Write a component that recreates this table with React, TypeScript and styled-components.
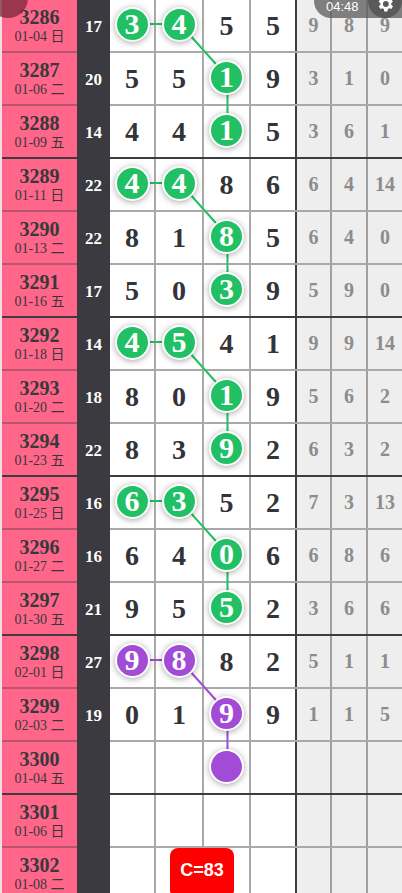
import React from "react";
import styled, { createGlobalStyle } from "styled-components";

const ROW_H = 53;
const BALL_X = [133, 180, 227.5, 274];

type Row = {
  issue: string;
  date: string;
  sum?: number;
  nums: (number | null)[];
  balls: number[];
  side: number[];
};

const rows: Row[] = [
  { issue: "3286", date: "01-04 日", sum: 17, nums: [3, 4, 5, 5], balls: [0, 1], side: [9, 8, 9] },
  { issue: "3287", date: "01-06 二", sum: 20, nums: [5, 5, 1, 9], balls: [2], side: [3, 1, 0] },
  { issue: "3288", date: "01-09 五", sum: 14, nums: [4, 4, 1, 5], balls: [2], side: [3, 6, 1] },
  { issue: "3289", date: "01-11 日", sum: 22, nums: [4, 4, 8, 6], balls: [0, 1], side: [6, 4, 14] },
  { issue: "3290", date: "01-13 二", sum: 22, nums: [8, 1, 8, 5], balls: [2], side: [6, 4, 0] },
  { issue: "3291", date: "01-16 五", sum: 17, nums: [5, 0, 3, 9], balls: [2], side: [5, 9, 0] },
  { issue: "3292", date: "01-18 日", sum: 14, nums: [4, 5, 4, 1], balls: [0, 1], side: [9, 9, 14] },
  { issue: "3293", date: "01-20 二", sum: 18, nums: [8, 0, 1, 9], balls: [2], side: [5, 6, 2] },
  { issue: "3294", date: "01-23 五", sum: 22, nums: [8, 3, 9, 2], balls: [2], side: [6, 3, 2] },
  { issue: "3295", date: "01-25 日", sum: 16, nums: [6, 3, 5, 2], balls: [0, 1], side: [7, 3, 13] },
  { issue: "3296", date: "01-27 二", sum: 16, nums: [6, 4, 0, 6], balls: [2], side: [6, 8, 6] },
  { issue: "3297", date: "01-30 五", sum: 21, nums: [9, 5, 5, 2], balls: [2], side: [3, 6, 6] },
  { issue: "3298", date: "02-01 日", sum: 27, nums: [9, 8, 8, 2], balls: [0, 1], side: [5, 1, 1] },
  { issue: "3299", date: "02-03 二", sum: 19, nums: [0, 1, 9, 9], balls: [2], side: [1, 1, 5] },
  { issue: "3300", date: "01-04 五", nums: [null, null, null, null], balls: [2], side: [] },
  { issue: "3301", date: "01-06 日", nums: [null, null, null, null], balls: [], side: [] },
  { issue: "3302", date: "01-08 二", nums: [null, null, null, null], balls: [], side: [] },
];

const GREEN = "#22c065";
const PURPLE = "#a24bd6";

const GlobalStyle = createGlobalStyle`
  html, body {
    margin: 0;
    padding: 0;
    background: #eeeeee;
    overflow: hidden;
  }
  body {
    font-family: "Liberation Serif", "Noto Sans CJK SC", serif;
  }
`;

const Page = styled.div`
  position: relative;
  width: 402px;
  height: 893px;
  overflow: hidden;
  background: #eeeeee;
`;

const Table = styled.div`
  position: relative;
  display: flex;
  flex-direction: column;
`;

const RowBox = styled.div<{ $thick: boolean }>`
  display: grid;
  grid-template-columns: 2px 75px 33px 46px 48px 47px 46px 35px 36px 34px;
  height: ${ROW_H}px;
  box-sizing: border-box;
  border-bottom: 2px solid ${(p) => (p.$thick ? "#3c3c42" : "#a9a9a9")};
`;

const Gutter = styled.div`
  background: #f2dde3;
  margin-bottom: -2px;
`;

const IssueCell = styled.div<{ $thick: boolean }>`
  background: #ff6689;
  display: flex;
  flex-direction: column;
  align-items: center;
  justify-content: center;
  color: #38383c;
  margin-bottom: -2px;
  border-bottom: 2px solid ${(p) => (p.$thick ? "#3c3c42" : "#b8566f")};
`;

const IssueNo = styled.div`
  font-size: 20px;
  line-height: 22px;
  font-weight: bold;
`;

const IssueDate = styled.div`
  font-size: 14px;
  line-height: 17px;
`;

const SumCell = styled.div`
  background: #3a3a40;
  color: #ffffff;
  font-weight: bold;
  font-size: 17px;
  display: flex;
  align-items: center;
  justify-content: center;
  margin-bottom: -2px;
`;

const NumCell = styled.div<{ $last: boolean }>`
  background: #ffffff;
  border-right: 2px solid ${(p) => (p.$last ? "#3c3c42" : "#a9a9a9")};
  display: flex;
  align-items: center;
  justify-content: center;
  font-weight: bold;
  font-size: 28px;
  color: #333338;
`;

const SideCell = styled.div<{ $last: boolean }>`
  background: #eeeeee;
  border-right: ${(p) => (p.$last ? "none" : "2px solid #a0a0a0")};
  display: flex;
  align-items: center;
  justify-content: center;
  font-weight: bold;
  font-size: 20px;
  color: #8c8c8c;
`;

const Ball = styled.div<{ $color: string }>`
  position: relative;
  z-index: 2;
  width: 31px;
  height: 31px;
  margin-top: -3px;
  border-radius: 50%;
  background: ${(p) => p.$color};
  border: 2px solid #ffffff;
  box-shadow: 0 1px 6px rgba(0, 0, 0, 0.35);
  color: #ffffff;
  font-size: 30px;
  font-weight: bold;
  display: flex;
  align-items: center;
  justify-content: center;
  line-height: 1;
`;

const Lines = styled.svg`
  position: absolute;
  left: 0;
  top: 0;
  z-index: 1;
  pointer-events: none;
`;

const BackButton = styled.div`
  position: absolute;
  left: -12px;
  top: -22px;
  width: 40px;
  height: 40px;
  border-radius: 50%;
  background: rgba(120, 40, 60, 0.75);
  z-index: 5;
`;

const TimePill = styled.div`
  position: absolute;
  right: 0;
  top: -16px;
  height: 34px;
  width: 88px;
  border-radius: 17px 0 0 17px;
  background: rgba(90, 90, 90, 0.75);
  z-index: 5;
  display: flex;
  align-items: center;
  justify-content: space-between;
  padding-left: 12px;
  box-sizing: border-box;
  color: #ffffff;
  font-family: "Liberation Sans", sans-serif;
  font-size: 13px;
`;

const TimeText = styled.span`
  margin-top: 10px;
`;

const GearWrap = styled.div`
  width: 34px;
  height: 34px;
  border-radius: 50%;
  background: #5a5a5a;
  display: flex;
  align-items: flex-end;
  justify-content: center;
  padding-bottom: 4px;
  box-sizing: border-box;
`;

const Badge = styled.div`
  position: absolute;
  left: 170px;
  top: 848px;
  width: 64px;
  height: 50px;
  border-radius: 8px;
  background: #ff0000;
  color: #ffffff;
  font-family: "Liberation Sans", sans-serif;
  font-weight: bold;
  font-size: 18px;
  display: flex;
  justify-content: center;
  padding-top: 12px;
  box-sizing: border-box;
  z-index: 4;
`;

const Gear = () => (
  <svg width="20" height="20" viewBox="0 0 24 24" fill="#ffffff">
    <path d="M19.4 13a7.5 7.5 0 0 0 0-2l2.1-1.6-2-3.5-2.5 1a7.4 7.4 0 0 0-1.7-1L15 3h-4l-.4 2.9a7.4 7.4 0 0 0-1.7 1l-2.5-1-2 3.5L6.6 11a7.5 7.5 0 0 0 0 2l-2.1 1.6 2 3.5 2.5-1a7.4 7.4 0 0 0 1.7 1L11 21h4l.4-2.9a7.4 7.4 0 0 0 1.7-1l2.5 1 2-3.5zM13 15.5a3.5 3.5 0 1 1 0-7 3.5 3.5 0 0 1 0 7z" />
  </svg>
);

function groupColor(i: number) {
  return i >= 12 ? PURPLE : GREEN;
}

function buildSegments() {
  const segs: { x1: number; y1: number; x2: number; y2: number; c: string }[] = [];
  for (let g = 0; g < 15; g += 3) {
    const pts: { x: number; y: number }[] = [];
    for (let r = g; r < g + 3; r++) {
      rows[r].balls.forEach((b) => pts.push({ x: BALL_X[b], y: r * ROW_H + 24 }));
    }
    for (let k = 0; k < pts.length - 1; k++) {
      segs.push({ x1: pts[k].x, y1: pts[k].y, x2: pts[k + 1].x, y2: pts[k + 1].y, c: groupColor(g) });
    }
  }
  return segs;
}

export default function App() {
  const segs = buildSegments();
  return (
    <Page>
      <GlobalStyle />
      <Table>
        {rows.map((row, i) => {
          const thick = i % 3 === 2;
          return (
            <RowBox key={row.issue} $thick={thick}>
              <Gutter />
              <IssueCell $thick={thick}>
                <IssueNo>{row.issue}</IssueNo>
                <IssueDate>{row.date}</IssueDate>
              </IssueCell>
              <SumCell>{row.sum ?? ""}</SumCell>
              {row.nums.map((n, j) => (
                <NumCell key={j} $last={j === 3}>
                  {row.balls.includes(j) ? (
                    <Ball $color={groupColor(i)}>{n ?? ""}</Ball>
                  ) : (
                    n ?? ""
                  )}
                </NumCell>
              ))}
              {[0, 1, 2].map((j) => (
                <SideCell key={j} $last={j === 2}>
                  {row.side[j] ?? ""}
                </SideCell>
              ))}
            </RowBox>
          );
        })}
        <Lines width="402" height="893">
          {segs.map((s, k) => (
            <line key={k} x1={s.x1} y1={s.y1} x2={s.x2} y2={s.y2} stroke={s.c} strokeWidth="2" />
          ))}
        </Lines>
      </Table>
      <BackButton />
      <TimePill>
        <TimeText>04:48</TimeText>
        <GearWrap>
          <Gear />
        </GearWrap>
      </TimePill>
      <Badge>C=83</Badge>
    </Page>
  );
}
